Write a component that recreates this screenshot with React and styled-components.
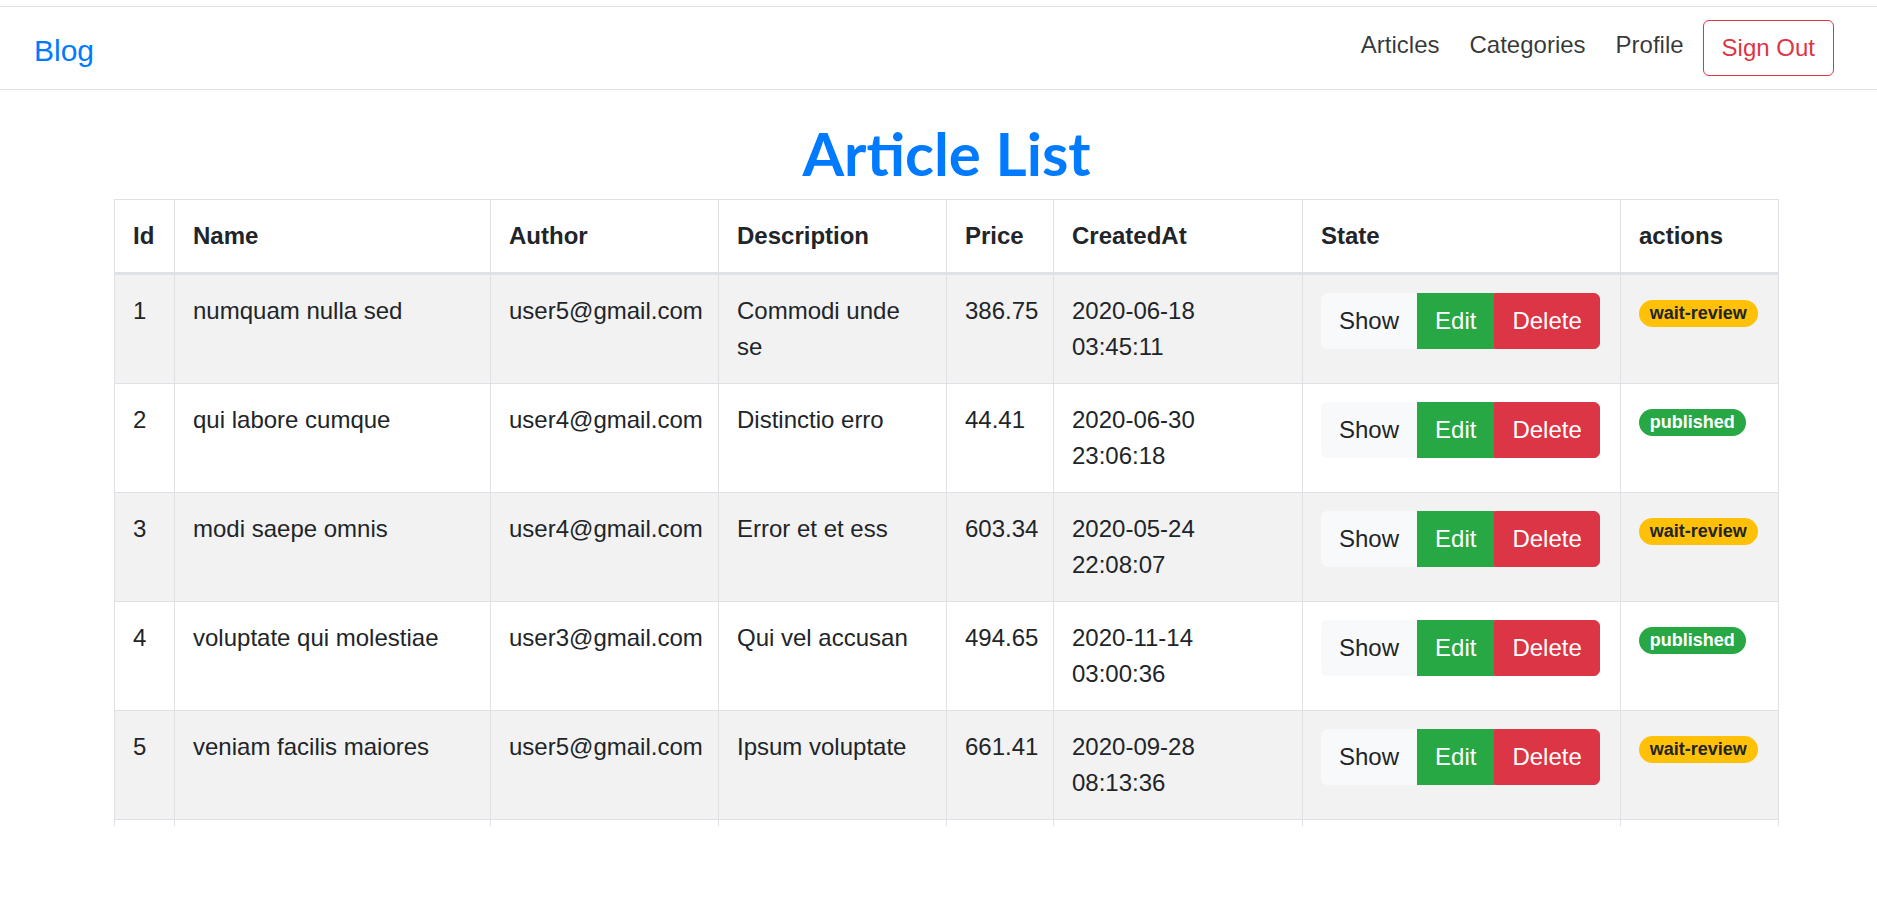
import React from 'react';
import styled, { createGlobalStyle, css } from 'styled-components';

const palette = {
  blue: '#007bff',
  green: '#28a745',
  red: '#dc3545',
  yellow: '#ffc107',
  light: '#f8f9fa',
  text: '#212529',
  border: '#dee2e6',
};

const GlobalStyle = createGlobalStyle`
  * {
    box-sizing: border-box;
  }
  body {
    margin: 0;
    background: #ffffff;
    color: ${palette.text};
    font-family: 'Liberation Sans', Arial, sans-serif;
    font-size: 24px;
    line-height: 1.5;
  }
`;

const Navbar = styled.nav`
  display: flex;
  align-items: center;
  justify-content: space-between;
  height: 84px;
  margin-top: 6px;
  padding: 0 43px 0 34px;
  border-top: 1px solid ${palette.border};
  border-bottom: 1px solid ${palette.border};
  background: #ffffff;
`;

const Brand = styled.a`
  color: ${palette.blue};
  font-size: 30px;
  line-height: 45px;
  text-decoration: none;
  padding-top: 4px;
`;

const NavList = styled.div`
  display: flex;
  align-items: center;
`;

const NavLink = styled.a`
  padding: 0 15px 6px;
  color: rgba(0, 0, 0, 0.78);
  font-size: 24px;
  line-height: 36px;
  text-decoration: none;
`;

const SignOutButton = styled.button`
  margin-left: 4px;
  padding: 9px 18px;
  border: 1px solid ${palette.red};
  border-radius: 6px;
  background: transparent;
  color: ${palette.red};
  font-family: inherit;
  font-size: 24px;
  line-height: 36px;
`;

const Main = styled.main`
  width: ${114 + 1665}px;
  padding-left: 114px;
`;

const Title = styled.h1`
  margin: 27px 0 10px;
  color: ${palette.blue};
  font-family: Lato, 'Liberation Sans', sans-serif;
  font-size: 60px;
  font-weight: 700;
  line-height: 1.2;
  text-align: center;
`;

const TableWrap = styled.div`
  width: 1665px;
  height: 627px;
  overflow: hidden;
`;

const Table = styled.table`
  width: 1664px;
  table-layout: fixed;
  border-collapse: collapse;
  border: 1px solid ${palette.border};

  tbody tr:nth-of-type(odd) {
    background: rgba(0, 0, 0, 0.05);
  }
`;

const cellBase = css`
  padding: 18px;
  border: 1px solid ${palette.border};
  text-align: left;
  vertical-align: top;
  line-height: 36px;
`;

const Th = styled.th`
  ${cellBase};
  border-bottom: 3px solid ${palette.border};
  font-weight: 700;
`;

const Td = styled.td`
  ${cellBase};
`;

const ButtonGroup = styled.div`
  display: flex;
`;

const variants = {
  light: { bg: palette.light, fg: palette.text },
  success: { bg: palette.green, fg: '#ffffff' },
  danger: { bg: palette.red, fg: '#ffffff' },
};

const GroupButton = styled.button`
  padding: 9px 17px;
  border: 1px solid ${(p) => variants[p.$variant].bg};
  background: ${(p) => variants[p.$variant].bg};
  color: ${(p) => variants[p.$variant].fg};
  font-family: inherit;
  font-size: 24px;
  line-height: 36px;

  &:first-child {
    border-radius: 6px 0 0 6px;
  }
  &:last-child {
    border-radius: 0 6px 6px 0;
  }
`;

const Badge = styled.span`
  display: inline-block;
  padding: 4.5px 10.8px;
  border-radius: 15px;
  background: ${(p) => (p.$state === 'published' ? palette.green : palette.yellow)};
  color: ${(p) => (p.$state === 'published' ? '#ffffff' : palette.text)};
  font-size: 18px;
  font-weight: 700;
  line-height: 1;
  vertical-align: baseline;
`;

const columns = [
  { label: 'Id', width: 60 },
  { label: 'Name', width: 316 },
  { label: 'Author', width: 228 },
  { label: 'Description', width: 228 },
  { label: 'Price', width: 107 },
  { label: 'CreatedAt', width: 249 },
  { label: 'State', width: 318 },
  { label: 'actions', width: 158 },
];

const articles = [
  { id: 1, name: 'numquam nulla sed', author: 'user5@gmail.com', description: 'Commodi unde se', price: '386.75', createdAt: '2020-06-18 03:45:11', state: 'wait-review' },
  { id: 2, name: 'qui labore cumque', author: 'user4@gmail.com', description: 'Distinctio erro', price: '44.41', createdAt: '2020-06-30 23:06:18', state: 'published' },
  { id: 3, name: 'modi saepe omnis', author: 'user4@gmail.com', description: 'Error et et ess', price: '603.34', createdAt: '2020-05-24 22:08:07', state: 'wait-review' },
  { id: 4, name: 'voluptate qui molestiae', author: 'user3@gmail.com', description: 'Qui vel accusan', price: '494.65', createdAt: '2020-11-14 03:00:36', state: 'published' },
  { id: 5, name: 'veniam facilis maiores', author: 'user5@gmail.com', description: 'Ipsum voluptate', price: '661.41', createdAt: '2020-09-28 08:13:36', state: 'wait-review' },
  { id: 6, name: 'dolorem eius quia', author: 'user2@gmail.com', description: 'Aut rerum sint', price: '128.90', createdAt: '2020-08-02 14:22:50', state: 'published' },
];

const App = () => {
  return (
    <>
      <GlobalStyle />
      <Navbar>
        <Brand href="#">Blog</Brand>
        <NavList>
          <NavLink href="#">Articles</NavLink>
          <NavLink href="#">Categories</NavLink>
          <NavLink href="#">Profile</NavLink>
          <SignOutButton>Sign Out</SignOutButton>
        </NavList>
      </Navbar>
      <Main>
        <Title>Article List</Title>
        <TableWrap>
          <Table>
            <colgroup>
              {columns.map((c) => (
                <col key={c.label} style={{ width: c.width }} />
              ))}
            </colgroup>
            <thead>
              <tr>
                {columns.map((c) => (
                  <Th key={c.label}>{c.label}</Th>
                ))}
              </tr>
            </thead>
            <tbody>
              {articles.map((a) => (
                <tr key={a.id}>
                  <Td>{a.id}</Td>
                  <Td>{a.name}</Td>
                  <Td>{a.author}</Td>
                  <Td>{a.description}</Td>
                  <Td>{a.price}</Td>
                  <Td>{a.createdAt}</Td>
                  <Td>
                    <ButtonGroup>
                      <GroupButton $variant="light">Show</GroupButton>
                      <GroupButton $variant="success">Edit</GroupButton>
                      <GroupButton $variant="danger">Delete</GroupButton>
                    </ButtonGroup>
                  </Td>
                  <Td>
                    <Badge $state={a.state}>{a.state}</Badge>
                  </Td>
                </tr>
              ))}
            </tbody>
          </Table>
        </TableWrap>
      </Main>
    </>
  );
};

export default App;
